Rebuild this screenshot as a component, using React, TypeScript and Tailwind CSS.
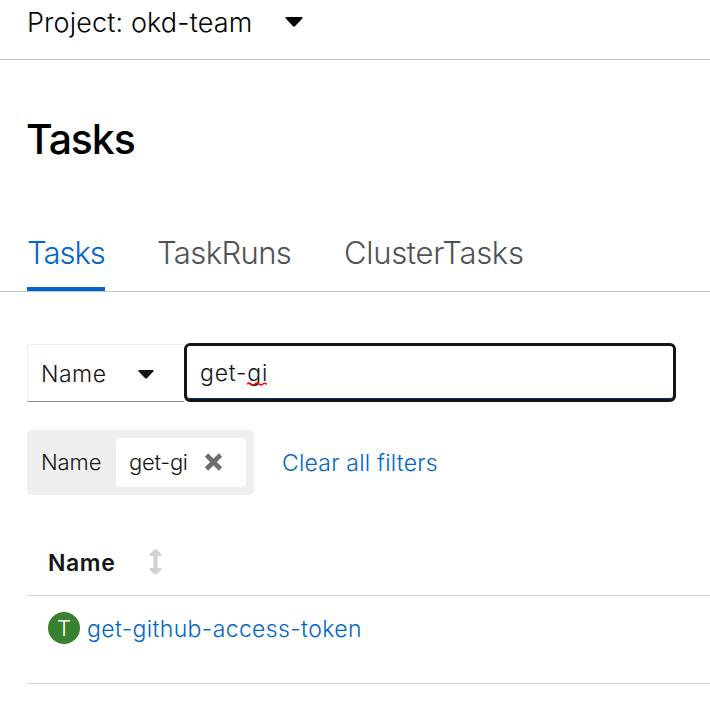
import React from 'react';

function Caret({ className }: { className: string }) {
  return (
    <svg className={className} viewBox="0 0 18 10" fill="currentColor" aria-hidden="true">
      <path d="M1.3 0H16.7C17.6 0 17.9.9 17.3 1.5L10 9.2C9.4 9.8 8.6 9.8 8 9.2L.7 1.5C.1.9.4 0 1.3 0Z" />
    </svg>
  );
}

function ProjectBar() {
  return (
    <header className="flex h-[60px] items-start border-b border-[#c8c8c8] pl-[27px] text-black">
      <span className="mt-[4px] w-[258px] text-[27px] leading-[38px] font-light tracking-[0.15px] whitespace-nowrap">
        Project: okd-team
      </span>
      <Caret className="mt-[17px] h-[10px] w-[18px]" />
    </header>
  );
}

function Tabs() {
  return (
    <nav className="flex h-[67px] border-b border-[#c8c8c8] pl-[27px] text-[31px] leading-[44px] font-light whitespace-nowrap text-[#4f5255]">
      <a className="mr-[52px] h-[66px] w-[78px] border-b-4 border-[#0066cc] pt-[6px] tracking-[-1px] text-[#0066cc]">Tasks</a>
      <a className="mr-[54px] w-[133px] pt-[6px] tracking-[-0.6px]">TaskRuns</a>
      <a className="w-[180px] pt-[6px] tracking-[-0.3px]">ClusterTasks</a>
    </nav>
  );
}

function FilterBar() {
  return (
    <div className="mt-[51px] flex h-[60px] items-start pl-[27px] text-[23px] leading-[32px] font-light text-[#151515]">
      <div className="mt-[1px] flex h-[58px] w-[157px] items-center border border-r-0 border-[#ededed] border-b-[#8a8d90] pl-[13px]">
        <span className="w-[97px] pt-[2px] tracking-[0.5px]">Name</span>
        <Caret className="mt-[2px] h-[9px] w-[16px]" />
      </div>
      <div className="flex h-[59px] w-[492px] items-center rounded-[6px] border-[3.5px] border-[#151515] bg-white pl-[13px] tracking-[0.8px] shadow-[inset_0_-1px_0_#0a2f5c]">
        <span>get-</span>
        <span className="relative">
          gi
          <svg className="absolute top-[25px] left-0 h-[4px] w-[20px]" viewBox="0 0 20 4" fill="none" stroke="#f00" strokeWidth="1.6" aria-hidden="true">
            <path d="M0 2.2Q2 .2 4 2T8 2T12 2T16 2T20 2.6" />
          </svg>
        </span>
      </div>
    </div>
  );
}

function Chips() {
  return (
    <div className="mt-[27px] flex h-[65px] items-center pl-[27px] font-light">
      <div className="flex h-[65px] w-[227px] items-center rounded-[5px] bg-[#efefef] pl-[14px] text-[22px] text-[#151515]">
        <span className="w-[75px] tracking-[-0.1px]">Name</span>
        <div className="flex h-[49px] w-[130px] items-center rounded-[4px] bg-white pl-[13px]">
          <span className="w-[75px] tracking-[-0.3px] whitespace-nowrap">get-gi</span>
          <svg className="-mt-[1px] h-[18px] w-[19px]" viewBox="0 0 18 18" fill="none" stroke="#6a6e73" strokeWidth="4.6" strokeLinecap="butt" aria-hidden="true">
            <path d="M2 2L16 16M16 2L2 16" />
          </svg>
        </div>
      </div>
      <a className="ml-[28px] pt-[2px] text-[23px] tracking-[0.22px] whitespace-nowrap text-[#0066cc]">Clear all filters</a>
    </div>
  );
}

function TaskTable() {
  return (
    <div className="mt-[33px] ml-[27px]">
      <div className="flex h-[68px] items-center border-b border-[#d2d2d2] pl-[21px]">
        <span className="w-[101px] pt-[3px] text-[23px] font-semibold tracking-[0.6px] text-[#151515]">Name</span>
        <svg className="h-[26px] w-[13px]" viewBox="0 0 12 26" preserveAspectRatio="none" fill="#d2d2d2" aria-hidden="true">
          <path d="M5.2.5Q6 0 6.8.5L11.7 5.3Q12 7 10.8 7H8V19H10.8Q12 19 11.7 20.7L6.8 25.5Q6 26 5.2 25.5L.3 20.7Q0 19 1.2 19H4V7H1.2Q0 7 .3 5.3Z" />
        </svg>
      </div>
      <div className="flex h-[88px] items-start border-b border-[#d2d2d2] pt-[16px] pl-[21px]">
        <span className="flex h-[32px] w-[32px] items-center justify-center rounded-full bg-[#38812f] text-[22px] leading-[32px] font-light text-white">T</span>
        <a className="ml-[7px] text-[23px] leading-[34px] font-light tracking-[0.38px] whitespace-nowrap text-[#0066cc]">get-github-access-token</a>
      </div>
    </div>
  );
}

export default function App() {
  return (
    <main className="h-[711px] w-full overflow-hidden bg-white font-['Inter','Liberation_Sans',sans-serif]">
      <ProjectBar />
      <h1 className="mt-[49px] mb-[56px] pl-[26px] text-[41px] leading-[60px] font-medium tracking-[-1.1px] text-black">Tasks</h1>
      <Tabs />
      <FilterBar />
      <Chips />
      <TaskTable />
    </main>
  );
}
